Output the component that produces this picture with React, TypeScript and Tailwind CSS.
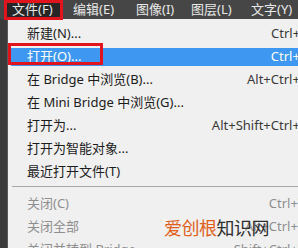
const font = { fontFamily: '"Noto Sans", "Noto Sans CJK SC", sans-serif' }

const topMenu = [
  { label: '文件(F)', cls: 'ml-[4px] w-[59px] pl-[8px] bg-[#262626]' },
  { label: '编辑(E)', cls: 'w-[63px] pl-[10px]' },
  { label: '图像(I)', cls: 'w-[55px] pl-[10px]' },
  { label: '图层(L)', cls: 'w-[60px] pl-[10px]' },
  { label: '文字(Y)', cls: 'w-[57px] pl-[10px]' },
]

const items = [
  { label: '新建(N)...', shortcut: 'Ctrl+N' },
  { label: '打开(O)...', shortcut: 'Ctrl+O', selected: true },
  { label: '在 Bridge 中浏览(B)...', shortcut: 'Alt+Ctrl+O' },
  { label: '在 Mini Bridge 中浏览(G)...', shortcut: '' },
  { label: '打开为...', shortcut: 'Alt+Shift+Ctrl+O' },
  { label: '打开为智能对象...', shortcut: '' },
  { label: '最近打开文件(T)', shortcut: '' },
  { sep: true },
  { label: '关闭(C)', shortcut: 'Ctrl+W', disabled: true },
  { label: '关闭全部', shortcut: 'Alt+Ctrl+W', disabled: true },
  { label: '关闭并转到 Bridge...', shortcut: 'Shift+Ctrl+W', disabled: true },
]

export default function App() {
  return (
    <div className="relative w-[298px] h-[248px] overflow-hidden bg-[#f0f0f0]" style={font}>
      {/* menu bar */}
      <div className="flex h-[19px] bg-[#464646] text-[13px] text-[#e8e8e8] leading-[19px]">
        {topMenu.map((m) => (
          <div key={m.label} className={'shrink-0 whitespace-nowrap ' + m.cls}>
            {m.label}
          </div>
        ))}
      </div>

      <div className="flex">
        <div className="shrink-0 w-[8px] h-[229px] bg-[#3a3a3a] border-r border-[#5a5a5a]" />
        <div className="shrink-0 w-[314px] pt-[3px] text-[13px]">
          {items.map((it, i) =>
            it.sep ? (
              <div key={i} className="h-[9px] pl-[4px] pt-[3px]">
                <div className="h-px bg-[#a8a8a8]" />
              </div>
            ) : (
              <div key={i} className="h-[23px] py-[2.5px] pl-[3px]">
                <div
                  className={
                    'flex h-full items-center justify-between whitespace-nowrap pl-[16px] pr-[12px] ' +
                    (it.selected
                      ? 'bg-[#3e97f0] text-white'
                      : it.disabled
                        ? 'text-[#8e8e8e]'
                        : 'text-[#1c1c1c]')
                  }
                >
                  <span>{it.label}</span>
                  <span className={it.selected ? 'text-white' : it.disabled ? 'text-[#8e8e8e]' : 'text-[#3a3a3a]'}>
                    {it.shortcut}
                  </span>
                </div>
              </div>
            ),
          )}
        </div>
      </div>

      {/* red annotation boxes */}
      <div className="absolute left-[4px] top-0 w-[59px] h-[20px] border-[3px] border-[#e1141e]" />
      <div className="absolute left-[8px] top-[43px] w-[95px] h-[22px] border-[3px] border-[#e1141e]" />

      {/* watermark */}
      <div className="absolute left-[164px] top-[217px] text-[18px] leading-[22px] tracking-[-0.5px]">
        <span className="text-[#e0611c]">爱创根</span>
        <span className="text-[#2e2e2e]">知识网</span>
      </div>
    </div>
  )
}
